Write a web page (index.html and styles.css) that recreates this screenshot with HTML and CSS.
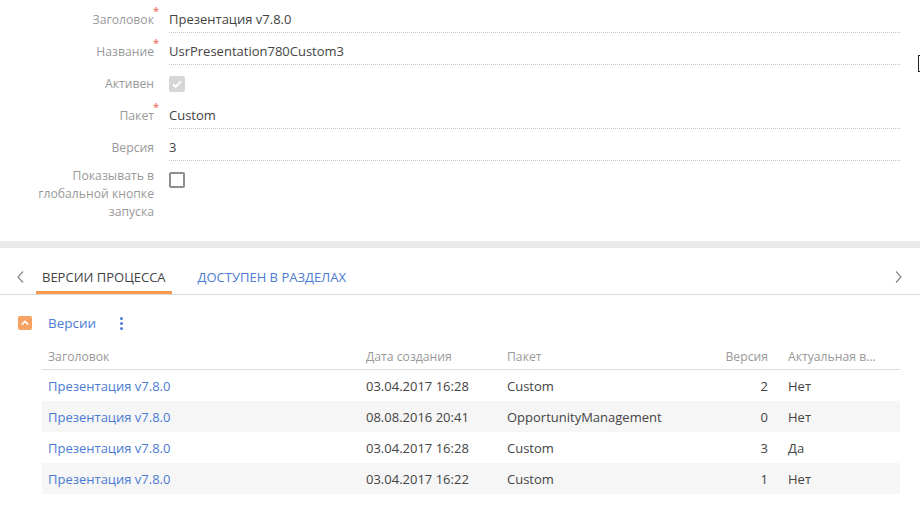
FILE: index.html
```html
<!DOCTYPE html>
<html lang="ru">
<head>
<meta charset="utf-8">
<link rel="stylesheet" href="styles.css">
</head>
<body>
<div class="page">
  <section class="form">
    <div class="row">
      <div class="label req">Заголовок</div>
      <div class="value text">Презентация v7.8.0</div>
    </div>
    <div class="row">
      <div class="label req">Название</div>
      <div class="value text">UsrPresentation780Custom3</div>
    </div>
    <div class="row">
      <div class="label">Активен</div>
      <div class="value"><span class="cb cb-checked"><svg viewBox="0 0 16 16" width="16" height="16"><path d="M4 8.3l2.6 2.5L12 5.4" fill="none" stroke="#fff" stroke-width="2"/></svg></span></div>
    </div>
    <div class="row">
      <div class="label req">Пакет</div>
      <div class="value text">Custom</div>
    </div>
    <div class="row">
      <div class="label">Версия</div>
      <div class="value text">3</div>
    </div>
    <div class="row row-multi">
      <div class="label">Показывать в<br>глобальной кнопке<br>запуска</div>
      <div class="value"><span class="cb"></span></div>
    </div>
  </section>

  <div class="band"></div>

  <nav class="tabs">
    <span class="arrow"><svg width="10" height="14" viewBox="0 0 10 14"><path d="M7 1.5L2 7l5 5.5" fill="none" stroke="#888" stroke-width="1.2"/></svg></span>
    <div class="tablist">
      <span class="tab active">Версии процесса</span>
      <span class="tab">Доступен в разделах</span>
    </div>
    <span class="arrow"><svg width="10" height="14" viewBox="0 0 10 14"><path d="M3 1.5L8 7l-5 5.5" fill="none" stroke="#888" stroke-width="1.2"/></svg></span>
  </nav>

  <section class="detail">
    <div class="detail-head">
      <span class="toggle"><svg width="14" height="14" viewBox="0 0 14 14"><path d="M3.8 8.6L7 5.4l3.2 3.2" fill="none" stroke="#fff" stroke-width="1.6"/></svg></span>
      <span class="detail-title">Версии</span>
      <span class="kebab"><i></i><i></i><i></i></span>
    </div>
    <div class="grid">
      <div class="gr ghead">
        <span class="c1">Заголовок</span><span class="c2">Дата создания</span><span class="c3">Пакет</span><span class="c4">Версия</span><span class="c5">Актуальная версия</span>
      </div>
      <div class="gr">
        <span class="c1 link">Презентация v7.8.0</span><span class="c2">03.04.2017 16:28</span><span class="c3">Custom</span><span class="c4">2</span><span class="c5">Нет</span>
      </div>
      <div class="gr alt">
        <span class="c1 link">Презентация v7.8.0</span><span class="c2">08.08.2016 20:41</span><span class="c3">OpportunityManagement</span><span class="c4">0</span><span class="c5">Нет</span>
      </div>
      <div class="gr">
        <span class="c1 link">Презентация v7.8.0</span><span class="c2">03.04.2017 16:28</span><span class="c3">Custom</span><span class="c4">3</span><span class="c5">Да</span>
      </div>
      <div class="gr alt">
        <span class="c1 link">Презентация v7.8.0</span><span class="c2">03.04.2017 16:22</span><span class="c3">Custom</span><span class="c4">1</span><span class="c5">Нет</span>
      </div>
    </div>
  </section>
  <span class="edge-mark"></span>
</div>
</body>
</html>
```

FILE: styles.css
```css
* { box-sizing: border-box; }
html, body { margin: 0; padding: 0; background: #fff; }
body {
  font-family: "Open Sans", "Liberation Sans", sans-serif;
  font-size: 13px;
  color: #444;
  width: 920px;
  height: 512px;
  overflow: hidden;
}
.page { position: relative; }

.form {
  padding: 4px 20px 0 0;
  height: 241px;
  display: flex;
  flex-direction: column;
  gap: 3px;
}
.row { display: flex; align-items: flex-start; }
.label {
  position: relative;
  width: 160px;
  flex: none;
  padding: 7px 6px 0 0;
  text-align: right;
  font-size: 12.2px;
  line-height: 18px;
  color: #999;
}
.label.req::after {
  content: "*";
  position: absolute;
  right: 1px;
  top: 1px;
  font-size: 11px;
  line-height: 11px;
  color: #e65a45;
}
.value {
  margin-left: 9px;
  flex: 1;
  height: 29px;
  padding-top: 6px;
  line-height: 18px;
}
.value.text { border-bottom: 1px dotted #c4c4c4; }
.row-multi .label { padding-top: 3px; }
.row-multi .value { padding-top: 6px; }

.cb {
  display: block;
  width: 16px;
  height: 16px;
  margin-top: 2px;
  border: 2px solid #8e8e8e;
  border-radius: 2px;
}
.cb-checked { border: none; background: #d6d6d6; }
.cb svg { display: block; }

.band { height: 7px; background: #e9ebeb; }

.tabs {
  display: flex;
  align-items: center;
  height: 47px;
  border-bottom: 1px solid #dcdcdc;
  padding: 14px 17px 0 16px;
}
.arrow { width: 10px; display: flex; align-items: center; margin-top: -3px; }
.tablist { flex: 1; display: flex; gap: 20px; padding-left: 10px; height: 100%; }
.tab {
  display: flex;
  align-items: center;
  height: 100%;
  padding: 0 6px;
  text-transform: uppercase;
  color: #4b7bd4;
  border-bottom: 3px solid transparent;
}
.tab.active { color: #444; border-bottom-color: #f79a4d; }

.detail { padding: 0 20px 0 18px; }
.detail-head {
  display: flex;
  align-items: center;
  height: 47px;
  padding-top: 8px;
}
.toggle {
  width: 14px;
  height: 14px;
  border-radius: 2px;
  background: #f7a262;
  display: flex;
}
.detail-title {
  margin-left: 16px;
  font-size: 13.5px;
  color: #4b7bd4;
}
.kebab {
  margin-left: 24px;
  display: flex;
  flex-direction: column;
  gap: 2px;
  padding-top: 1px;
}
.kebab i { width: 3px; height: 3px; background: #4b7bd4; border-radius: 50%; display: block; }

.grid { margin-left: 24px; }
.gr {
  display: grid;
  grid-template-columns: 318px 141px 220px 61px 118px;
  height: 31px;
  align-items: center;
}
.gr span { padding: 0 6px; white-space: nowrap; overflow: hidden; text-overflow: ellipsis; }
.ghead { height: 28px; border-bottom: 1px solid #dedede; color: #999; font-size: 12.2px; padding-top: 2px; }
.gr .c4 { text-align: right; padding-left: 0; padding-right: 14px; }
.gr .c5 { padding-left: 6px; padding-right: 21px; }
.alt { background: #f6f6f6; }
.link { color: #4b7bd4; }

.edge-mark {
  position: absolute;
  left: 918px;
  top: 55px;
  width: 4px;
  height: 17px;
  border: 1px solid #222;
  border-right: none;
}
```
